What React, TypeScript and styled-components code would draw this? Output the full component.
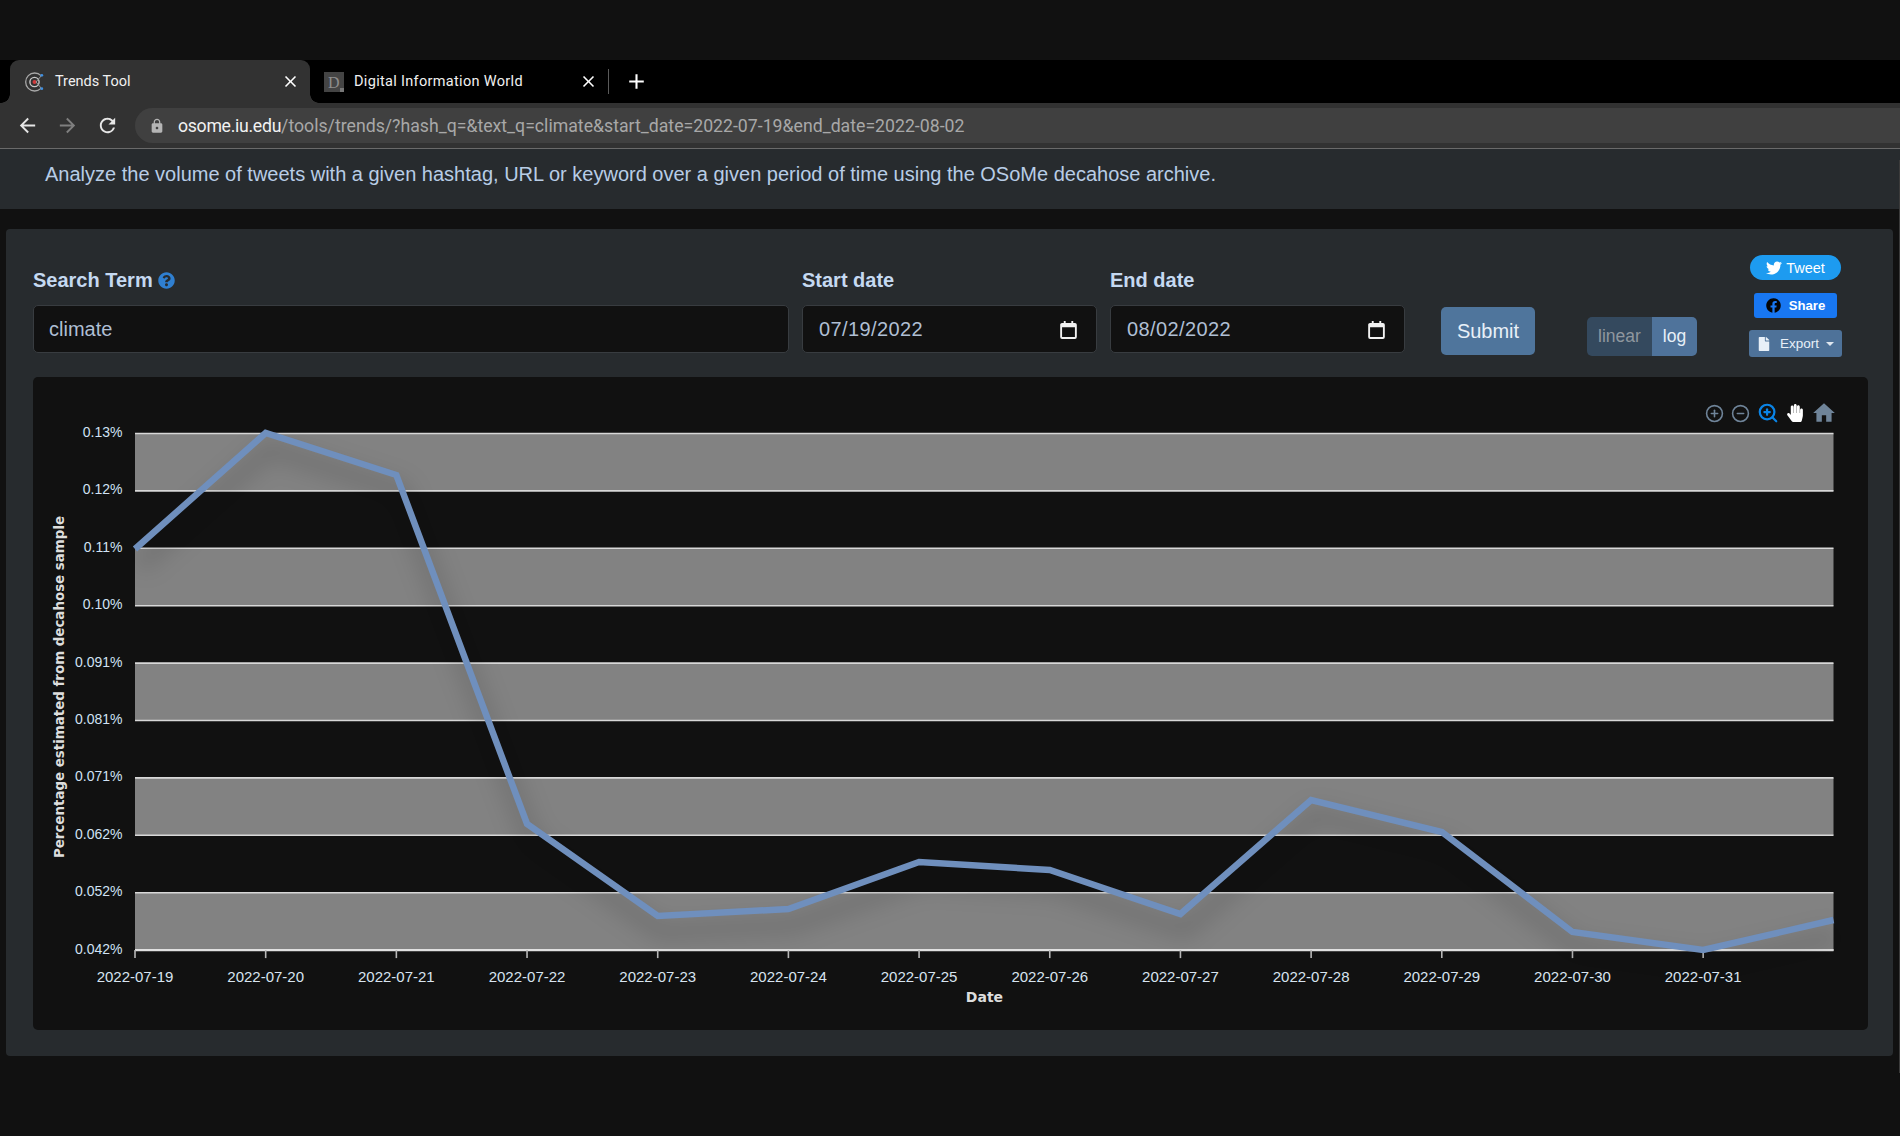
import React from "react";
import styled, { createGlobalStyle } from "styled-components";
import { FaTwitter, FaFacebook, FaFile, FaQuestionCircle, FaHandPaper } from "react-icons/fa";
import { MdArrowBack, MdArrowForward, MdRefresh, MdLock, MdClose, MdAdd, MdHome } from "react-icons/md";
import { CirclePlus, CircleMinus, ZoomIn } from "lucide-react";

const Global = createGlobalStyle`
  html, body { margin: 0; padding: 0; background: #111111; }
  * { box-sizing: border-box; }
`;

const Page = styled.div`
  position: relative;
  width: 1900px;
  height: 1136px;
  overflow: hidden;
  background: #111111;
  font-family: "Liberation Sans", Arial, sans-serif;
`;

const TopStrip = styled.div`
  height: 60px;
`;

const TabBar = styled.div`
  height: 43px;
  background: #000;
  display: flex;
  align-items: stretch;
  padding-left: 10px;
`;

const Tab = styled.div<{ $active?: boolean }>`
  position: relative;
  width: ${(p) => (p.$active ? "300px" : "298px")};
  padding: 0 10px 0 ${(p) => (p.$active ? "15px" : "14px")};
  display: flex;
  align-items: center;
  gap: 10px;
  border-radius: 9px 9px 0 0;
  background: ${(p) => (p.$active ? "#323232" : "transparent")};
  color: #f0f0f0;
  font-family: Roboto, "Liberation Sans", sans-serif;
  font-size: 14.5px;
  letter-spacing: ${(p) => (p.$active ? "0" : "0.32px")};
  &::before,
  &::after {
    content: "";
    display: ${(p) => (p.$active ? "block" : "none")};
    position: absolute;
    bottom: 0;
    width: 9px;
    height: 9px;
  }
  &::before {
    left: -9px;
    background: radial-gradient(circle at 0 0, #000 8.5px, #323232 9px);
  }
  &::after {
    right: -9px;
    background: radial-gradient(circle at 100% 0, #000 8.5px, #323232 9px);
  }
`;

const TabTitle = styled.span`
  flex: 1;
  white-space: nowrap;
`;

const TabClose = styled(MdClose)`
  font-size: 19px;
  color: #fff;
`;

const TabDivider = styled.div`
  width: 1px;
  height: 25px;
  margin-top: 9px;
  background: #5a5a5a;
`;

const NewTab = styled(MdAdd)`
  font-size: 25px;
  color: #fff;
  margin: 9px 0 0 15px;
`;

const Toolbar = styled.div`
  height: 46px;
  background: #323232;
  border-bottom: 1px solid #6a6a6a;
  display: flex;
  align-items: flex-start;
  padding: 5px 0 0 16px;
`;

const NavButton = styled.div<{ $dim?: boolean }>`
  width: 40px;
  height: 35px;
  display: flex;
  align-items: center;
  justify-content: flex-start;
  font-size: 23px;
  color: ${(p) => (p.$dim ? "#7f7f7f" : "#e6e6e6")};
`;

const Omnibox = styled.div`
  flex: 1;
  height: 35px;
  margin-left: -1px;
  padding-left: 14px;
  display: flex;
  align-items: center;
  gap: 13px;
  background: #404040;
  border-radius: 18px 0 0 18px;
  font-family: Roboto, "Liberation Sans", sans-serif;
  font-size: 17.7px;
  color: #a8a8a8;
  white-space: nowrap;
`;

const Lock = styled(MdLock)`
  font-size: 16px;
  color: #b5b5b5;
`;

const Host = styled.span`
  color: #f2f2f2;
  letter-spacing: -0.3px;
`;

const Intro = styled.div`
  height: 60px;
  padding: 13px 0 0 45px;
  background: #272b2e;
  color: #b8cde6;
  font-size: 20px;
  line-height: 24px;
`;

const Card = styled.section`
  margin: 20px 7px 0 6px;
  height: 827px;
  padding: 26px 25px 0 27px;
  background: #272b2e;
  border-radius: 4px;
`;

const FormRow = styled.div`
  height: 122px;
  display: flex;
  align-items: flex-start;
`;

const Field = styled.div<{ $width: number; $left: number }>`
  width: ${(p) => p.$width}px;
  margin-left: ${(p) => p.$left}px;
  padding-top: 13px;
`;

const FieldLabel = styled.div`
  height: 37px;
  display: flex;
  align-items: flex-start;
  gap: 5px;
  font-size: 20px;
  font-weight: 700;
  line-height: 24px;
  color: #c5d9f1;
`;

const HelpIcon = styled(FaQuestionCircle)`
  font-size: 17px;
  color: #2f7fd0;
  margin-top: 4px;
`;

const TextBox = styled.div`
  height: 48px;
  padding: 0 15px;
  display: flex;
  align-items: center;
  justify-content: space-between;
  background: #111111;
  border: 1px solid #383c40;
  border-radius: 5px;
  font-size: 20px;
  color: #afbfd4;
`;

const DateValue = styled.span`
  margin-left: 1px;
  letter-spacing: 0.4px;
`;

const CalendarIcon = styled.svg`
  width: 17px;
  height: 19px;
  margin-right: 4px;
`;

const SubmitButton = styled.button`
  width: 94px;
  height: 48px;
  margin: 52px 0 0 36px;
  padding: 0;
  border: 0;
  border-radius: 5px;
  background: #4f759c;
  color: #e8f0f8;
  font: 20px "Liberation Sans", Arial, sans-serif;
`;

const Toggle = styled.div`
  width: 110px;
  height: 39px;
  margin: 62px 0 0 52px;
  display: flex;
  border-radius: 5px;
  overflow: hidden;
  font-size: 17.5px;
`;

const ToggleOption = styled.div<{ $on?: boolean }>`
  flex: ${(p) => (p.$on ? "0 0 45px" : "1")};
  display: flex;
  align-items: center;
  justify-content: center;
  background: ${(p) => (p.$on ? "#4f739b" : "#34495e")};
  color: ${(p) => (p.$on ? "#e8f0f8" : "#8f979f")};
`;

const SocialColumn = styled.div`
  width: 93px;
  margin-left: 52px;
  display: flex;
  flex-direction: column;
  align-items: center;
`;

const TweetButton = styled.div`
  width: 91px;
  height: 25px;
  display: flex;
  align-items: center;
  justify-content: center;
  gap: 4px;
  border-radius: 13px;
  background: #1d9bf0;
  color: #fff;
  font-size: 14.5px;
`;

const ShareButton = styled.div`
  width: 83px;
  height: 25px;
  margin-top: 13px;
  display: flex;
  align-items: center;
  justify-content: center;
  gap: 8px;
  border-radius: 3px;
  background: #1877f2;
  color: #fff;
  font-size: 13.2px;
  font-weight: 700;
`;

const FacebookIcon = styled(FaFacebook)`
  font-size: 15px;
  color: #050505;
`;

const ExportButton = styled.div`
  width: 93px;
  height: 27px;
  margin-top: 12px;
  display: flex;
  align-items: center;
  justify-content: center;
  gap: 9px;
  border-radius: 3px;
  background: #4e7299;
  color: #e8f0f8;
  font-size: 13.5px;
`;

const Caret = styled.span`
  width: 0;
  height: 0;
  margin-left: -2px;
  border-left: 4px solid transparent;
  border-right: 4px solid transparent;
  border-top: 4px solid #dfe7ef;
`;

const ChartPanel = styled.div`
  position: relative;
  height: 653px;
  background: #111111;
  border-radius: 5px;
`;

const ChartSvg = styled.svg`
  display: block;
  width: 100%;
  height: 100%;
`;

const ChartTools = styled.div`
  position: absolute;
  top: 25px;
  right: 29px;
  display: flex;
  align-items: center;
  height: 22px;
`;

const ToolSlot = styled.div<{ $w: number; $c: string }>`
  width: ${(p) => p.$w}px;
  display: flex;
  justify-content: center;
  color: ${(p) => p.$c};
`;

const ScrollEdge = styled.div`
  position: absolute;
  top: 160px;
  right: 0;
  width: 1px;
  height: 913px;
  background: #3b3b3b;
`;

const YTick = styled.text`
  font-family: "Liberation Sans", Arial, sans-serif;
  font-size: 14px;
  fill: #d0e2f4;
  text-anchor: end;
`;

const XTick = styled.text`
  font-family: "Liberation Sans", Arial, sans-serif;
  font-size: 15px;
  fill: #d8e4f0;
  text-anchor: middle;
`;

const AxisTitle = styled.text<{ $size: number }>`
  font-family: "DejaVu Sans", Verdana, sans-serif;
  font-size: ${(p) => p.$size}px;
  font-weight: 700;
  fill: #dddddd;
  text-anchor: middle;
`;

const yLabels = ["0.13%", "0.12%", "0.11%", "0.10%", "0.091%", "0.081%", "0.071%", "0.062%", "0.052%", "0.042%"];
const xLabels = [
  "2022-07-19", "2022-07-20", "2022-07-21", "2022-07-22", "2022-07-23", "2022-07-24", "2022-07-25",
  "2022-07-26", "2022-07-27", "2022-07-28", "2022-07-29", "2022-07-30", "2022-07-31",
];
const values = [549, 433, 475, 824, 916, 909, 862, 870, 914, 800, 832, 932, 950, 920];

const PLOT_LEFT = 134.5;
const PLOT_RIGHT = 1833;
const PLOT_TOP = 433.5;
const ROW = 57.4;
const COL = 130.68;
const BOTTOM = PLOT_TOP + ROW * 9;

const linePoints = values
  .map((y, i) => `${i === 13 ? PLOT_RIGHT : PLOT_LEFT + COL * i},${y}`)
  .join(" ");

function Calendar() {
  return (
    <CalendarIcon viewBox="0 0 18 20" aria-hidden>
      <path d="M2.2 4h13.6a1 1 0 0 1 1 1v13a1 1 0 0 1-1 1H2.2a1 1 0 0 1-1-1V5a1 1 0 0 1 1-1z" fill="none" stroke="#f2f2f2" strokeWidth="2" />
      <path d="M1.5 4h15v3.5h-15zM4 1h2v3H4zM12 1h2v3h-2z" fill="#f2f2f2" />
    </CalendarIcon>
  );
}

function Chart() {
  return (
    <ChartSvg viewBox="33 377 1834 653">
      <defs>
        <filter id="lineShadow" x="-5%" y="-15%" width="110%" height="135%">
          <feGaussianBlur stdDeviation="11" />
        </filter>
      </defs>
      {[0, 2, 4, 6, 8].map((i) => (
        <rect key={i} x={PLOT_LEFT} y={PLOT_TOP + ROW * i} width={PLOT_RIGHT - PLOT_LEFT} height={ROW} fill="#828282" />
      ))}
      {yLabels.map((_, i) => (
        <line key={i} x1={PLOT_LEFT} x2={PLOT_RIGHT} y1={PLOT_TOP + ROW * i} y2={PLOT_TOP + ROW * i} stroke="#d8d8d8" strokeWidth="1.6" />
      ))}
      <line x1={PLOT_LEFT} x2={PLOT_RIGHT} y1={BOTTOM} y2={BOTTOM} stroke="#e0e0e0" strokeWidth="2.2" />
      {xLabels.map((_, i) => (
        <line key={i} x1={PLOT_LEFT + COL * i} x2={PLOT_LEFT + COL * i} y1={BOTTOM} y2={BOTTOM + 8} stroke="#b8b8b8" strokeWidth="1.6" />
      ))}
      <polyline points={linePoints} fill="none" stroke="#000" strokeOpacity="0.13" strokeWidth="18" filter="url(#lineShadow)" transform="translate(4 16)" />
      <polyline points={linePoints} fill="none" stroke="#6f8fbd" strokeWidth="6.5" strokeLinejoin="miter" />
      {yLabels.map((t, i) => (
        <YTick key={t} x="122" y={PLOT_TOP + ROW * i + 3.5}>{t}</YTick>
      ))}
      {xLabels.map((t, i) => (
        <XTick key={t} x={PLOT_LEFT + COL * i} y="982">{t}</XTick>
      ))}
      <AxisTitle $size={14} x="984" y="1002">Date</AxisTitle>
      <AxisTitle $size={13.4} transform="translate(63 687) rotate(-90)">Percentage estimated from decahose sample</AxisTitle>
    </ChartSvg>
  );
}

export default function App() {
  return (
    <Page>
      <Global />
      <TopStrip />
      <TabBar>
        <Tab $active>
          <svg width="20" height="20" viewBox="0 0 20 20" aria-hidden>
            <path d="M16 3.6A9 9 0 1 0 16 16.4" fill="none" stroke="#a8a8a8" strokeWidth="1.3" />
            <circle cx="9.5" cy="10" r="4.6" fill="none" stroke="#c8c8c8" strokeWidth="1.4" />
            <circle cx="9.5" cy="10" r="2" fill="#d03a3c" />
            <path d="M16.5 3.5L11 10L16.5 16.5" fill="none" stroke="#9a9a9a" strokeWidth="1" />
            <circle cx="16.8" cy="3.3" r="1.4" fill="#3f8fe0" />
            <circle cx="16.8" cy="16.7" r="1.4" fill="#3f8fe0" />
          </svg>
          <TabTitle>Trends Tool</TabTitle>
          <TabClose />
        </Tab>
        <Tab>
          <svg width="20" height="20" viewBox="0 0 20 20" aria-hidden>
            <rect width="20" height="20" fill="#444" />
            <text x="10" y="16" fontFamily="Liberation Serif" fontSize="16" textAnchor="middle" fill="#8d8d8d">D</text>
            <rect x="16" y="16" width="4" height="4" fill="#777" />
          </svg>
          <TabTitle>Digital Information World</TabTitle>
          <TabClose />
        </Tab>
        <TabDivider />
        <NewTab />
      </TabBar>
      <Toolbar>
        <NavButton><MdArrowBack /></NavButton>
        <NavButton $dim><MdArrowForward /></NavButton>
        <NavButton><MdRefresh /></NavButton>
        <Omnibox>
          <Lock />
          <span><Host>osome.iu.edu</Host>/tools/trends/?hash_q=&amp;text_q=climate&amp;start_date=2022-07-19&amp;end_date=2022-08-02</span>
        </Omnibox>
      </Toolbar>
      <Intro>Analyze the volume of tweets with a given hashtag, URL or keyword over a given period of time using the OSoMe decahose archive.</Intro>
      <Card>
        <FormRow>
          <Field $width={756} $left={0}>
            <FieldLabel>Search Term <HelpIcon /></FieldLabel>
            <TextBox>climate</TextBox>
          </Field>
          <Field $width={295} $left={13}>
            <FieldLabel>Start date</FieldLabel>
            <TextBox><DateValue>07/19/2022</DateValue><Calendar /></TextBox>
          </Field>
          <Field $width={295} $left={13}>
            <FieldLabel>End date</FieldLabel>
            <TextBox><DateValue>08/02/2022</DateValue><Calendar /></TextBox>
          </Field>
          <SubmitButton>Submit</SubmitButton>
          <Toggle>
            <ToggleOption>linear</ToggleOption>
            <ToggleOption $on>log</ToggleOption>
          </Toggle>
          <SocialColumn>
            <TweetButton><FaTwitter size={16} /> Tweet</TweetButton>
            <ShareButton><FacebookIcon /> Share</ShareButton>
            <ExportButton><FaFile size={14} /> Export <Caret /></ExportButton>
          </SocialColumn>
        </FormRow>
        <ChartPanel>
          <Chart />
          <ChartTools>
            <ToolSlot $w={25} $c="#6f8499"><CirclePlus size={19} strokeWidth={2} /></ToolSlot>
            <ToolSlot $w={26} $c="#6f8499"><CircleMinus size={19} strokeWidth={2} /></ToolSlot>
            <ToolSlot $w={29} $c="#0a84e6"><ZoomIn size={22} strokeWidth={2.4} /></ToolSlot>
            <ToolSlot $w={26} $c="#fff"><FaHandPaper size={18} /></ToolSlot>
            <ToolSlot $w={31} $c="#6f8499"><MdHome size={26} /></ToolSlot>
          </ChartTools>
        </ChartPanel>
      </Card>
      <ScrollEdge />
    </Page>
  );
}
